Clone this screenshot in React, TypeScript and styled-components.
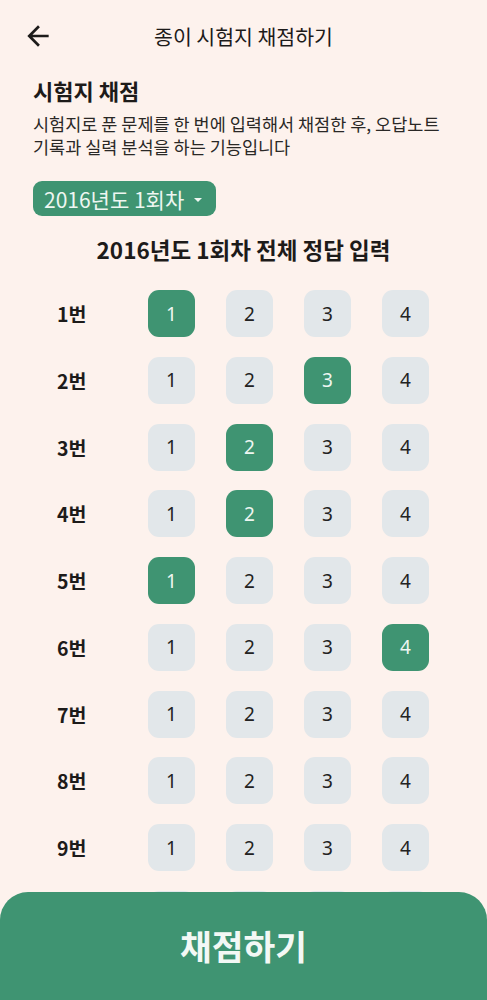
import styled, { createGlobalStyle } from 'styled-components';

const GlobalStyle = createGlobalStyle`
	html, body {
		margin: 0;
		padding: 0;
		background: #fdf2ed;
	}
	body {
		font-family: 'Noto Sans CJK KR', 'Noto Sans', sans-serif;
		color: #1d1b1a;
	}
	* {
		box-sizing: border-box;
	}
`;

const Page = styled.div`
	min-height: 100vh;
	background: #fdf2ed;
	padding-bottom: 120px;
`;

const Header = styled.header`
	height: 72px;
	display: grid;
	grid-template-columns: 60px 1fr 60px;
	align-items: center;
`;

const BackButton = styled.button`
	border: none;
	background: none;
	padding: 0 0 0 22px;
	display: flex;
	align-items: center;
	cursor: pointer;
`;

const Title = styled.h1`
	margin: 0;
	text-align: center;
	font-size: 20.5px;
	font-weight: 400;
	color: #1d1b1a;
`;

const Intro = styled.section`
	padding: 0 10px 0 33px;
`;

const SectionTitle = styled.h2`
	margin: 3px 0 0;
	font-size: 22px;
	font-weight: 700;
	line-height: 30px;
`;

const Description = styled.p`
	margin: 7px 0 0;
	font-size: 17.5px;
	line-height: 23px;
	color: #2a2826;
	white-space: nowrap;
`;

const RoundSelect = styled.button`
	margin-top: 23px;
	height: 35px;
	padding: 0 14px 0 11px;
	border: none;
	border-radius: 9px;
	background: #3f9472;
	color: #eef6f1;
	font-family: inherit;
	font-size: 21px;
	display: inline-flex;
	align-items: center;
	gap: 10px;
`;

const Caret = styled.span`
	width: 0;
	height: 0;
	border-left: 4px solid transparent;
	border-right: 4px solid transparent;
	border-top: 4px solid #eef6f1;
	margin-top: 2px;
`;

const Heading = styled.h3`
	margin: 16px 0 0;
	text-align: center;
	font-size: 22.5px;
	font-weight: 700;
	line-height: 34px;
`;

const AnswerGrid = styled.div`
	margin-top: 24px;
	display: grid;
	grid-template-columns: 117px repeat(4, 47px);
	column-gap: 31px;
	row-gap: 19.75px;
	align-items: center;
`;

const RowLabel = styled.div`
	padding-left: 57px;
	font-size: 19.5px;
	font-weight: 700;
`;

const Choice = styled.button<{ $selected: boolean }>`
	width: 47px;
	height: 47px;
	border: none;
	border-radius: 11px;
	background: ${(p) => (p.$selected ? '#3f9472' : '#e2e7ea')};
	color: ${(p) => (p.$selected ? '#eef6f1' : '#222')};
	font-family: 'Noto Sans', sans-serif;
	font-size: 19px;
	display: flex;
	align-items: center;
	justify-content: center;
	padding: 0;
`;

const SubmitBar = styled.button`
	position: fixed;
	left: 0;
	right: 0;
	bottom: 0;
	height: 108px;
	border: none;
	border-radius: 28px 28px 0 0;
	background: #3f9472;
	color: #f3f8f5;
	font-family: inherit;
	font-size: 34.5px;
	font-weight: 700;
	padding-bottom: 4px;
`;

const answers: (number | null)[] = [1, 3, 2, 2, 1, 4, null, null, null, null];

function App() {
	return (
		<>
			<GlobalStyle />
			<Page>
				<Header>
					<BackButton aria-label="뒤로">
						<svg width="32" height="32" viewBox="0 0 24 24">
							<path
								d="M20 11H7.83l5.59-5.59L12 4l-8 8 8 8 1.41-1.41L7.83 13H20v-2z"
								fill="#1d1b1a"
							/>
						</svg>
					</BackButton>
					<Title>종이 시험지 채점하기</Title>
					<div />
				</Header>
				<Intro>
					<SectionTitle>시험지 채점</SectionTitle>
					<Description>
						시험지로 푼 문제를 한 번에 입력해서 채점한 후, 오답노트
						<br />
						기록과 실력 분석을 하는 기능입니다
					</Description>
					<RoundSelect>
						2016년도 1회차
						<Caret />
					</RoundSelect>
				</Intro>
				<Heading>2016년도 1회차 전체 정답 입력</Heading>
				<AnswerGrid>
					{answers.map((answer, index) => (
						<>
							<RowLabel key={`l${index}`}>{index + 1}번</RowLabel>
							{[1, 2, 3, 4].map((n) => (
								<Choice key={`${index}-${n}`} $selected={answer === n}>
									{n}
								</Choice>
							))}
						</>
					))}
				</AnswerGrid>
			</Page>
			<SubmitBar>채점하기</SubmitBar>
		</>
	);
}

export default App;
